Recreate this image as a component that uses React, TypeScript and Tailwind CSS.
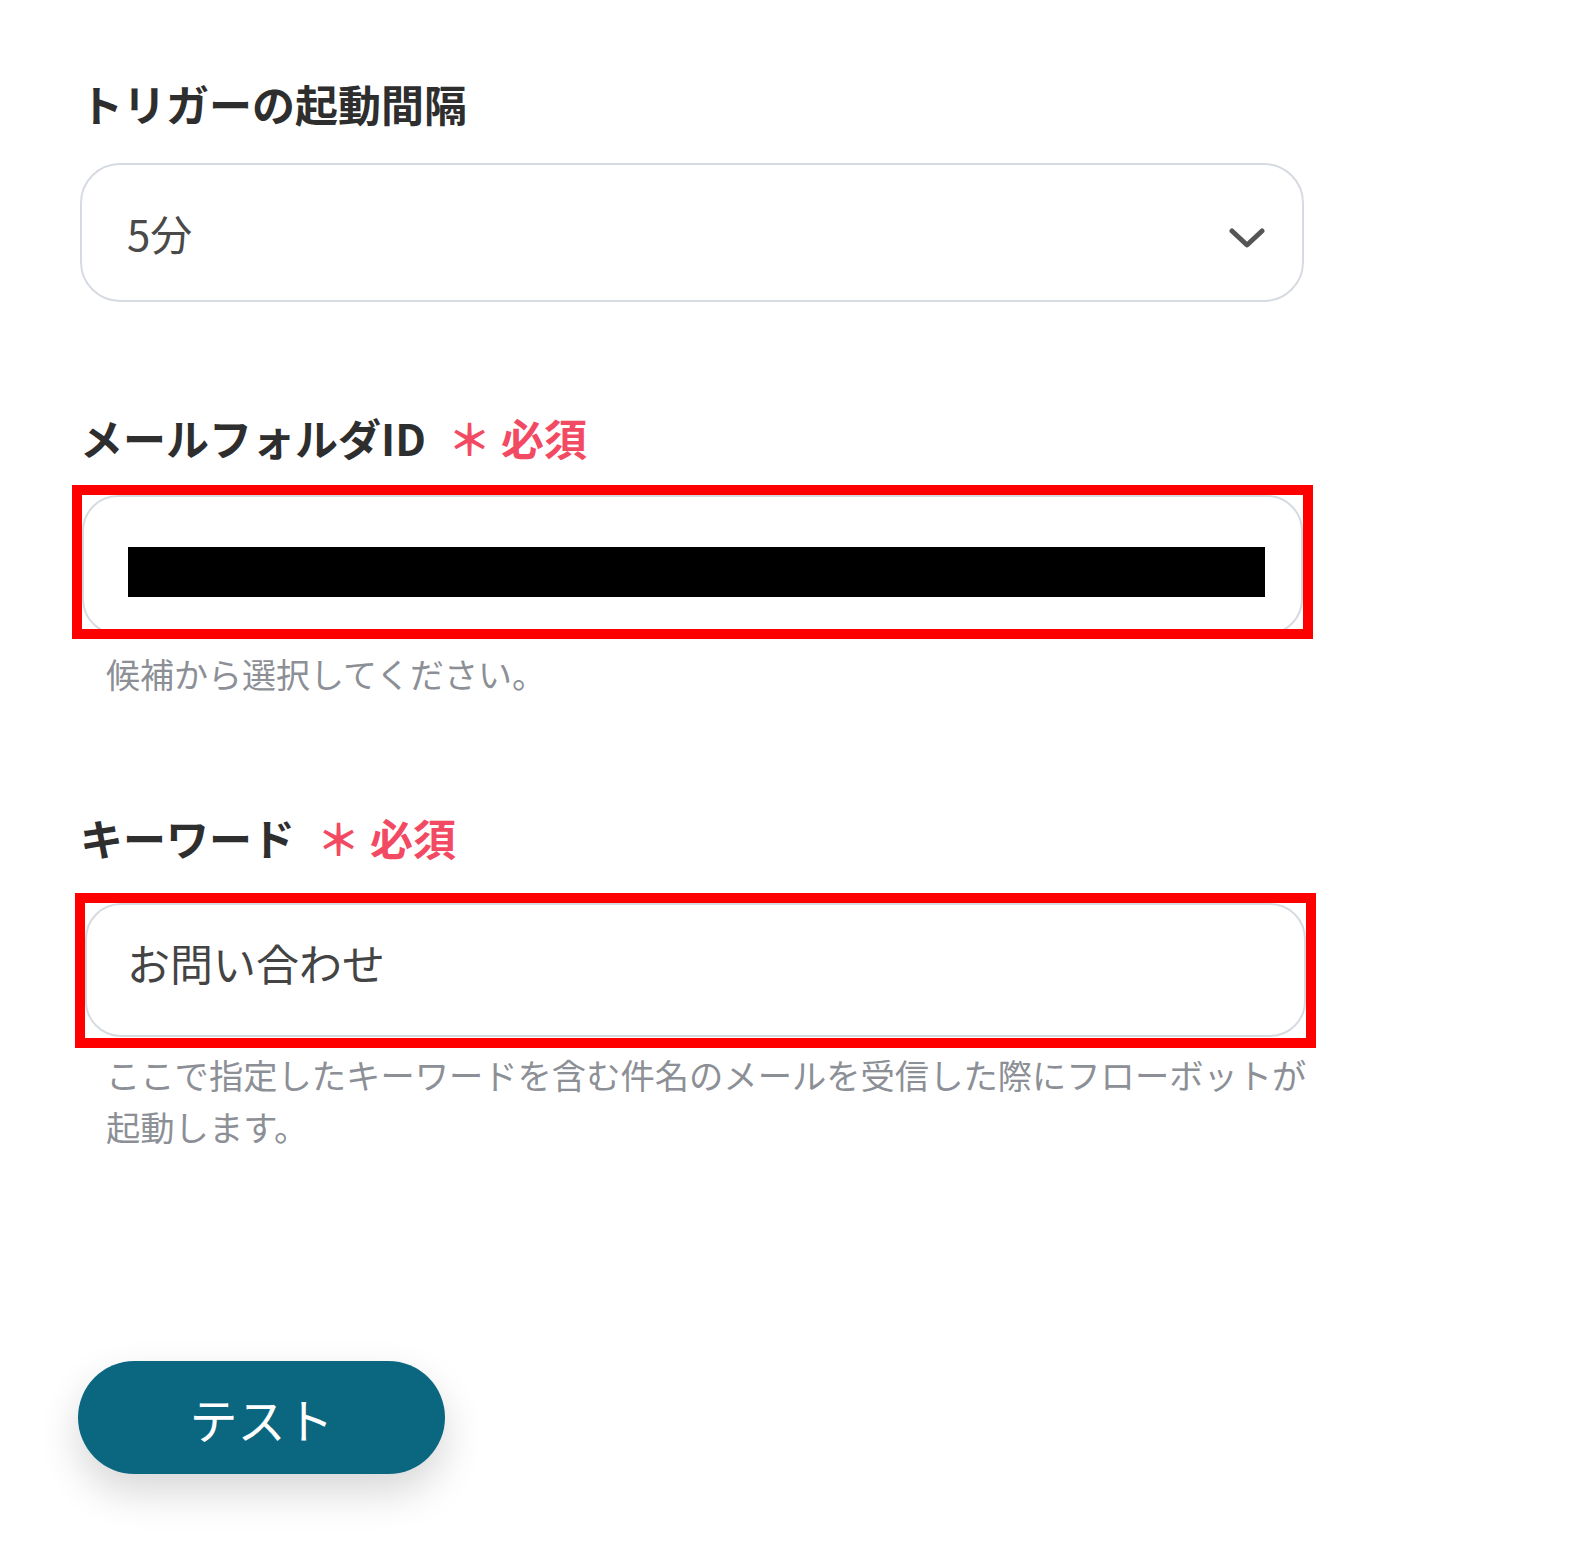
import React from "react";

const Required = () => (
    <span className="ml-[22px] font-bold text-[#f24a62]">
        ＊<span className="ml-[10px]">必須</span>
    </span>
);

type LabelProps = {
    text: string;
    required?: boolean;
    className?: string;
};
const Label = ({ text, required, className }: LabelProps) => (
    <div
        className={`text-[43px] leading-[63px] font-semibold text-[#2e2e2e] ${className ?? ""}`}
    >
        {text}
        {required && <Required />}
    </div>
);

function App() {
    return (
        <div className="min-h-[1560px] bg-white font-['Noto_Sans_CJK_JP','Noto_Sans',sans-serif]">
            <div className="flex flex-col items-start pl-[80px] pt-[72px]">
                <Label text="トリガーの起動間隔" />
                <div className="mt-[28px] flex h-[139px] w-[1224px] items-center justify-between rounded-[40px] border-2 border-[#d6dbe1] pl-[45px] pr-[37px]">
                    <span className="text-[42px] text-[#4a4a4a]">5分</span>
                    <svg className="mt-[10px]" width="36" height="22" viewBox="0 0 36 22" fill="none">
                        <path
                            d="M3 4 L18 18 L33 4"
                            stroke="#555"
                            strokeWidth="5"
                            strokeLinecap="round"
                            strokeLinejoin="round"
                        />
                    </svg>
                </div>

                <Label text="メールフォルダID" required className="mt-[104px]" />
                {/* annotation box */}
                <div className="mt-[16px] ml-[-8px] h-[154px] w-[1241px] overflow-hidden border-[10px] border-[#ff0000]">
                    <div className="h-[140px] w-full rounded-[36px] border-2 border-[#d6dbe1] pl-[44px] pt-[50px]">
                        <div className="h-[50px] w-[1137px] bg-black" />
                    </div>
                </div>
                <div className="mt-[9px] ml-[26px] text-[34px] leading-[52px] text-[#8c9096]">
                    候補から選択してください。
                </div>

                <Label text="キーワード" required className="mt-[106px]" />
                <div className="mt-[24px] ml-[-5px] h-[155px] w-[1241px] overflow-hidden border-[10px] border-[#ff0000]">
                    <div className="h-[134px] w-full rounded-[36px] border-2 border-[#d6dbe1] pl-[40px] pt-[26px] text-[43px] leading-[63px] text-[#444]">
                        お問い合わせ
                    </div>
                </div>
                <div className="ml-[26px] w-[1212px] text-[34.3px] leading-[52px] text-[#8c9096]">
                    ここで指定したキーワードを含む件名のメールを受信した際にフローボットが起動します。
                </div>

                <button className="mt-[209px] ml-[-2px] h-[113px] w-[367px] rounded-full bg-[#0b6680] text-[48px] font-normal text-white shadow-[0_18px_40px_rgba(0,0,0,0.16)]">
                    テスト
                </button>
            </div>
        </div>
    );
}

export default App;
